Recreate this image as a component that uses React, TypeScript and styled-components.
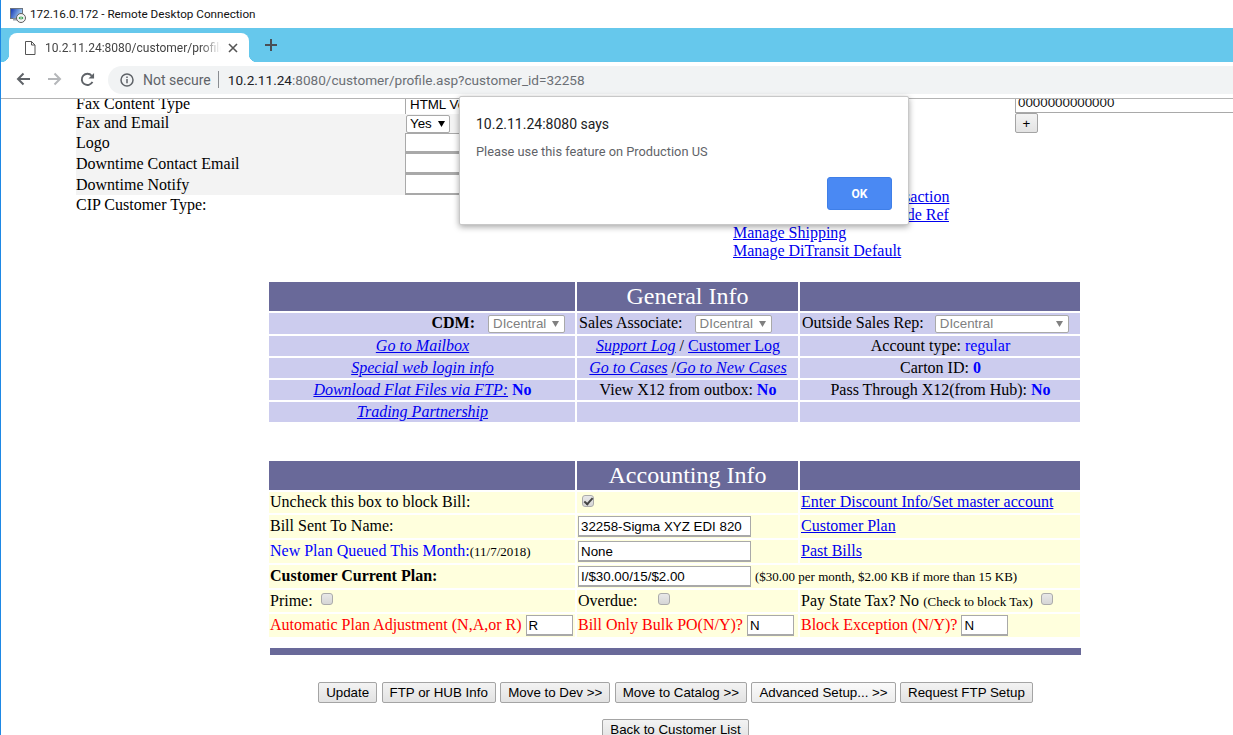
import React from "react";
import styled, { createGlobalStyle } from "styled-components";

const GlobalStyle = createGlobalStyle`
  html, body {
    margin: 0;
    padding: 0;
    height: 100%;
    overflow: hidden;
    background: #fff;
  }
  #root { height: 100%; }
  * { box-sizing: border-box; }
`;

const arrow = (color: string) =>
  `url("data:image/svg+xml,%3Csvg xmlns='http://www.w3.org/2000/svg' width='7' height='6'%3E%3Cpath d='M0 0h7L3.500 6z' fill='${color}'/%3E%3C/svg%3E")`;

const Shell = styled.div`
  position: relative;
  width: 1233px;
  height: 735px;
  overflow: hidden;
  border-left: 1px solid #1e88e5;
  font-family: "Liberation Serif", "Times New Roman", serif;
  font-size: 16px;
  color: #000;
`;

const TitleBar = styled.div`
  height: 28px;
  display: flex;
  align-items: center;
  padding-left: 8px;
  gap: 4px;
  font-family: Roboto, sans-serif;
  font-size: 11.7px;
  color: #111;
`;

const TabStrip = styled.div`
  height: 34px;
  background: #66c8ec;
  display: flex;
  align-items: flex-end;
  padding-left: 8px;
`;

const Tab = styled.div`
  position: relative;
  width: 240px;
  height: 29px;
  background: #fff;
  border-radius: 8px 8px 0 0;
  display: flex;
  align-items: center;
  padding-left: 15px;
  font-family: Roboto, sans-serif;
  font-size: 12px;
  color: #444;
  &::before,
  &::after {
    content: "";
    position: absolute;
    bottom: 0;
    width: 8px;
    height: 8px;
  }
  &::before {
    left: -8px;
    background: radial-gradient(circle at 0 0, #66c8ec 8px, #fff 8.5px);
  }
  &::after {
    right: -8px;
    background: radial-gradient(circle at 100% 0, #66c8ec 8px, #fff 8.5px);
  }
`;

const TabTitle = styled.span`
  width: 176px;
  margin-left: 9px;
  white-space: nowrap;
  overflow: hidden;
  -webkit-mask-image: linear-gradient(90deg, #000 88%, transparent);
  mask-image: linear-gradient(90deg, #000 88%, transparent);
`;

const NewTab = styled.div`
  margin: 0 0 7px 16px;
  height: 20px;
  display: flex;
  align-items: center;
`;

const Toolbar = styled.div`
  height: 37px;
  display: flex;
  align-items: center;
  padding: 0 0 2px 15px;
  border-bottom: 1px solid #b4b4b4;
`;

const NavIcons = styled.div`
  display: flex;
  align-items: center;
  gap: 18px;
  width: 92px;
`;

const AddressBar = styled.div`
  flex: 1;
  height: 28px;
  margin-top: 1px;
  background: #f1f3f4;
  border-radius: 14px 0 0 14px;
  display: flex;
  align-items: center;
  padding-left: 12px;
  font-family: Roboto, sans-serif;
  font-size: 13.6px;
  white-space: nowrap;
`;

const NotSecure = styled.span`
  margin-left: 9px;
  font-size: 14px;
  color: #5f6368;
`;

const Divider = styled.span`
  width: 1px;
  height: 17px;
  margin: 0 9px 0 7px;
  background: #8a8d91;
`;

const Host = styled.span`
  color: #202124;
`;

const UrlRest = styled.span`
  color: #6b6f74;
`;

const Page = styled.div`
  height: 636px;
  overflow: hidden;
`;

const TopSection = styled.div`
  margin-top: -4px;
  height: 185px;
  display: grid;
  grid-template-columns: 657px 282px 1fr;
  padding-left: 75px;
`;

const InfoRow = styled.div<{ $shaded?: boolean; $h: number }>`
  display: grid;
  grid-template-columns: 329px 1fr;
  height: ${(p) => p.$h}px;
  line-height: ${(p) => (p.$h > 20 ? p.$h : p.$h - 1)}px;
  background: ${(p) => (p.$shaded ? "#f3f3f3" : "transparent")};
`;

const InfoInput = styled.div`
  height: 100%;
  width: 200px;
  background: #fff;
  border: 1px solid #a9a9a9;
  border-width: 1px 1px 2px 1px;
  border-right: 0;
`;

const FaxType = styled.div`
  height: 100%;
  padding: 1px 0 0 4px;
  font-family: "Liberation Sans", Arial, sans-serif;
  font-size: 13.33px;
  line-height: 17px;
  border-left: 1px solid #a9a9a9;
  background: #fff;
`;

const YesSelect = styled.div`
  padding-left: 1px;
  line-height: 0;
  height: 100%;
  display: flex;
  align-items: center;
`;

const LinkColumn = styled.div`
  padding-top: 93px;
  white-space: nowrap;
  line-height: 18px;
`;

const PlainLink = styled.a`
  display: block;
  color: #0000ee;
  text-decoration: underline;
`;

const FaxNumber = styled.div`
  height: 18px;
  border: 1px solid #a9a9a9;
  border-top: 0;
  border-right: 0;
  padding-left: 2px;
  font-family: "Liberation Sans", Arial, sans-serif;
  font-size: 13.33px;
  line-height: 16px;
  color: #111;
`;

const SmallButton = styled.button`
  display: block;
  width: 23px;
  height: 20px;
  padding: 0;
  background: linear-gradient(#f3f3f3, #e3e3e3);
  border: 1px solid #a4a4a4;
  border-radius: 2px;
  font-family: "Liberation Sans", Arial, sans-serif;
  font-size: 13.33px;
  color: #000;
`;

const FormTable = styled.table`
  width: 815px;
  margin-left: 266px;
  table-layout: fixed;
  border-collapse: separate;
  border-spacing: 2px;
`;

const HeadCell = styled.th`
  padding: 0;
  height: 29px;
  background: #696999;
  color: #fff;
  font-size: 24px;
  font-weight: 400;
  text-align: center;
  white-space: nowrap;
`;

const Cell = styled.td<{ $tone: "lilac" | "cream"; $align?: string; $h: number; $lift?: boolean }>`
  padding: 0 1px ${(p) => (p.$lift ? 1 : 0)}px ${(p) => (p.$tone === "lilac" ? 2 : 1)}px;
  height: ${(p) => p.$h}px;
  background: ${(p) => (p.$tone === "lilac" ? "#ccccee" : "#ffffdd")};
  text-align: ${(p) => p.$align || "left"};
  white-space: nowrap;
  overflow: hidden;
  line-height: 18px;
`;

const SelectBox = styled.select<{ $w: number; $dark?: boolean }>`
  appearance: none;
  width: ${(p) => p.$w}px;
  height: 18px;
  padding: 0 0 0 ${(p) => (p.$dark ? 3 : 4)}px;
  margin: 0;
  vertical-align: baseline;
  background: #fff ${(p) => arrow(p.$dark ? "%23000" : "%23808080")} no-repeat right ${(p) => (p.$dark ? 4 : 5)}px center;
  border: 1px solid #a9a9a9;
  border-radius: 2px;
  font-family: "Liberation Sans", Arial, sans-serif;
  font-size: 13.33px;
  color: ${(p) => (p.$dark ? "#000" : "#808080")};
  opacity: 1;
`;

const CdmLabel = styled.b`
  margin-right: 13px;
`;

const AssocLabel = styled.span<{ $gap: number }>`
  margin-right: ${(p) => p.$gap}px;
`;

const CdmGap = styled.span`
  margin-right: 9px;
`;

const BlueLink = styled.a<{ $italic?: boolean }>`
  color: #0000ee;
  text-decoration: underline;
  font-style: ${(p) => (p.$italic ? "italic" : "normal")};
`;

const Value = styled.span<{ $bold?: boolean }>`
  color: #0000ff;
  font-weight: ${(p) => (p.$bold ? 700 : 400)};
`;

const AccountingWrap = styled.div`
  margin-top: 35px;
`;

const TextBox = styled.input<{ $w: number }>`
  width: ${(p) => p.$w}px;
  height: 21px;
  margin: 0;
  padding: 1px 2px;
  vertical-align: baseline;
  background: #fff;
  border: 1px solid #a9a9a9;
  border-width: 1px 1px 2px 1px;
  font-family: "Liberation Sans", Arial, sans-serif;
  font-size: 13.33px;
  color: #000;
  outline: 0;
`;

const Tick = styled.input<{ $left?: number }>`
  appearance: none;
  position: relative;
  display: inline-block;
  width: 12px;
  height: 12px;
  margin: 0 0 0 ${(p) => p.$left ?? 0}px;
  vertical-align: 1px;
  background: linear-gradient(#e8e8e8, #d6d6d6);
  border: 1px solid #ababab;
  border-radius: 3px;
  &:checked::after {
    content: "";
    position: absolute;
    left: 3px;
    top: 0;
    width: 3px;
    height: 7px;
    border: solid #444;
    border-width: 0 2px 2px 0;
    transform: rotate(42deg);
  }
`;

const Small = styled.span<{ $gap?: number }>`
  font-size: 13px;
  margin-left: ${(p) => p.$gap ?? 0}px;
`;

const Red = styled.span`
  color: #ff0000;
`;

const Rule = styled.div`
  width: 811px;
  height: 7px;
  margin: 9px 0 0 269px;
  background: #696999;
`;

const ButtonBar = styled.div`
  width: 812px;
  margin: 27px 0 0 268.5px;
  display: flex;
  justify-content: center;
  gap: 4.4px;
`;

const BackBar = styled(ButtonBar)`
  margin-top: 16px;
`;

const ActionButton = styled.button<{ $hover?: boolean }>`
  height: 21px;
  padding: 0 7px;
  background: ${(p) => (p.$hover ? "linear-gradient(#fafafa, #ececec)" : "linear-gradient(#f3f3f3, #e2e2e2)")};
  border: 1px solid #a4a4a4;
  border-radius: 2px;
  font-family: "Liberation Sans", Arial, sans-serif;
  font-size: 13.33px;
  color: #000;
  white-space: nowrap;
`;

const Dialog = styled.div`
  position: absolute;
  left: 458px;
  top: 96px;
  width: 450px;
  height: 129px;
  background: #fff;
  border: 1px solid #c8c8c8;
  border-radius: 2px;
  box-shadow: 0 2px 6px rgba(0, 0, 0, 0.35);
  padding: 18px 16px 0;
  font-family: Roboto, sans-serif;
`;

const DialogTitle = styled.div`
  font-size: 14px;
  line-height: 18px;
  color: #202124;
`;

const DialogBody = styled.div`
  margin-top: 11px;
  font-size: 12.8px;
  line-height: 16px;
  color: #5f6368;
`;

const DialogActions = styled.div`
  margin-top: 17px;
  display: flex;
  justify-content: flex-end;
`;

const OkButton = styled.button`
  width: 65px;
  height: 33px;
  background: #4a89f3;
  border: 1px solid #3f7fe8;
  border-radius: 3px;
  color: #fff;
  font-family: Roboto, sans-serif;
  font-size: 12px;
  font-weight: 700;
`;

const RdpIcon = () => (
  <svg width="17" height="18" viewBox="0 0 17 18">
    <defs>
      <linearGradient id="rdpScreen" x1="0" x2="1" y1="0" y2="0.4">
        <stop offset="0" stopColor="#0b2fb0" />
        <stop offset="1" stopColor="#a9d4f5" />
      </linearGradient>
    </defs>
    <rect x="1.500" y="3.500" width="12" height="10" fill="url(#rdpScreen)" stroke="#6b7480" />
    <rect x="4" y="13.500" width="6" height="2" fill="#9aa0a8" />
    <circle cx="12" cy="13" r="4.500" fill="#f4f4f4" stroke="#5c5c5c" />
    <path d="M9.500 13l2-1.800v3.600zM14.500 13l-2-1.800v3.600z" fill="#1f9a3a" />
  </svg>
);

const FileIcon = () => (
  <svg width="12" height="14" viewBox="0 0 12 14" fill="none" stroke="#555" strokeWidth="1">
    <path d="M1.5.5h6l3.5 3.5v9.500h-9.500zM7.500.5V4H11" />
  </svg>
);

const CloseIcon = () => (
  <svg width="10" height="10" viewBox="0 0 10 10" stroke="#555" strokeWidth="1.6" style={{ marginLeft: 7 }}>
    <path d="M1 1l8 8M9 1l-8 8" />
  </svg>
);

const PlusIcon = () => (
  <svg width="12" height="12" viewBox="0 0 12 12" stroke="#4a4f55" strokeWidth="2">
    <path d="M6 0v12M0 6h12" />
  </svg>
);

const NavArrow = ({ flip, color }: { flip?: boolean; color: string }) => (
  <svg width="14" height="14" viewBox="0 0 14 14" fill="none" stroke={color} strokeWidth="2" style={flip ? { transform: "scaleX(-1)" } : undefined}>
    <path d="M14 7H2M7.500 1.500L2 7l5.500 5.500" />
  </svg>
);

const ReloadIcon = () => (
  <svg width="15" height="15" viewBox="0 0 16 16" fill="none">
    <path d="M13.300 10.500A6 6 0 1 1 12.500 4" stroke="#5f6368" strokeWidth="2" />
    <path d="M15 1v6H9z" fill="#5f6368" />
  </svg>
);

const InfoIcon = () => (
  <svg width="14" height="14" viewBox="0 0 14 14" fill="none">
    <circle cx="7" cy="7" r="6" stroke="#5f6368" strokeWidth="1.500" />
    <path d="M7 6v4.200M7 3.500v1.500" stroke="#5f6368" strokeWidth="1.500" />
  </svg>
);

export default function App() {
  return (
    <Shell>
      <GlobalStyle />
      <TitleBar>
        <RdpIcon />
        <span>172.16.0.172 - Remote Desktop Connection</span>
      </TitleBar>
      <TabStrip>
        <Tab>
          <FileIcon />
          <TabTitle>10.2.11.24:8080/customer/profile.asp?customer_id=32258</TabTitle>
          <CloseIcon />
        </Tab>
        <NewTab>
          <PlusIcon />
        </NewTab>
      </TabStrip>
      <Toolbar>
        <NavIcons>
          <NavArrow color="#5f6368" />
          <NavArrow color="#b5b7ba" flip />
          <ReloadIcon />
        </NavIcons>
        <AddressBar>
          <InfoIcon />
          <NotSecure>Not secure</NotSecure>
          <Divider />
          <Host>10.2.11.24</Host>
          <UrlRest>:8080/customer/profile.asp?customer_id=32258</UrlRest>
        </AddressBar>
      </Toolbar>

      <Page>
        <TopSection>
          <div>
            <InfoRow $h={19}>
              <span>Fax Content Type</span>
              <FaxType>HTML Version</FaxType>
            </InfoRow>
            <InfoRow $h={19} $shaded>
              <span>Fax and Email</span>
              <YesSelect>
                <SelectBox $w={44} $dark disabled>
                  <option>Yes</option>
                </SelectBox>
              </YesSelect>
            </InfoRow>
            <InfoRow $h={20} $shaded>
              <span>Logo</span>
              <InfoInput />
            </InfoRow>
            <InfoRow $h={21} $shaded>
              <span>Downtime Contact Email</span>
              <InfoInput />
            </InfoRow>
            <InfoRow $h={21} $shaded>
              <span>Downtime Notify</span>
              <InfoInput />
            </InfoRow>
            <InfoRow $h={20}>
              <span>CIP Customer Type:</span>
            </InfoRow>
          </div>
          <LinkColumn>
            <PlainLink>Manage Retailer Hub Transaction</PlainLink>
            <PlainLink>Manage Customer Item Code Ref</PlainLink>
            <PlainLink>Manage Shipping</PlainLink>
            <PlainLink>Manage DiTransit Default</PlainLink>
          </LinkColumn>
          <div>
            <FaxNumber>0000000000000</FaxNumber>
            <SmallButton>+</SmallButton>
          </div>
        </TopSection>

        <FormTable>
          <colgroup>
            <col width="306" />
            <col width="221" />
            <col width="280" />
          </colgroup>
          <tbody>
            <tr>
              <HeadCell />
              <HeadCell>General Info</HeadCell>
              <HeadCell />
            </tr>
            <tr>
              <Cell $tone="lilac" $h={21} $align="right">
                <CdmLabel>CDM:</CdmLabel>
                <SelectBox $w={77} disabled>
                  <option>DIcentral</option>
                </SelectBox>
                <CdmGap />
              </Cell>
              <Cell $tone="lilac" $h={21}>
                <AssocLabel $gap={12}>Sales Associate:</AssocLabel>
                <SelectBox $w={77} disabled>
                  <option>DIcentral</option>
                </SelectBox>
              </Cell>
              <Cell $tone="lilac" $h={21}>
                <AssocLabel $gap={11}>Outside Sales Rep:</AssocLabel>
                <SelectBox $w={134} disabled>
                  <option>DIcentral</option>
                </SelectBox>
              </Cell>
            </tr>
            <tr>
              <Cell $tone="lilac" $h={20} $align="center">
                <BlueLink $italic>Go to Mailbox</BlueLink>
              </Cell>
              <Cell $tone="lilac" $h={20} $align="center">
                <BlueLink $italic>Support Log</BlueLink> / <BlueLink>Customer Log</BlueLink>
              </Cell>
              <Cell $tone="lilac" $h={20} $align="center">
                Account type: <Value>regular</Value>
              </Cell>
            </tr>
            <tr>
              <Cell $tone="lilac" $h={20} $align="center">
                <BlueLink $italic>Special web login info</BlueLink>
              </Cell>
              <Cell $tone="lilac" $h={20} $align="center">
                <BlueLink $italic>Go to Cases</BlueLink> /<BlueLink $italic>Go to New Cases</BlueLink>
              </Cell>
              <Cell $tone="lilac" $h={20} $align="center">
                Carton ID: <Value $bold>0</Value>
              </Cell>
            </tr>
            <tr>
              <Cell $tone="lilac" $h={20} $align="center">
                <BlueLink $italic>Download Flat Files via FTP:</BlueLink> <Value $bold>No</Value>
              </Cell>
              <Cell $tone="lilac" $h={20} $align="center">
                View X12 from outbox: <Value $bold>No</Value>
              </Cell>
              <Cell $tone="lilac" $h={20} $align="center">
                Pass Through X12(from Hub): <Value $bold>No</Value>
              </Cell>
            </tr>
            <tr>
              <Cell $tone="lilac" $h={20} $align="center">
                <BlueLink $italic>Trading Partnership</BlueLink>
              </Cell>
              <Cell $tone="lilac" $h={20} />
              <Cell $tone="lilac" $h={20} />
            </tr>
          </tbody>
        </FormTable>

        <AccountingWrap>
          <FormTable>
            <colgroup>
              <col width="306" />
              <col width="221" />
              <col width="280" />
            </colgroup>
            <tbody>
              <tr>
                <HeadCell />
                <HeadCell>Accounting Info</HeadCell>
                <HeadCell />
              </tr>
              <tr>
                <Cell $tone="cream" $h={21} $lift>Uncheck this box to block Bill:</Cell>
                <Cell $tone="cream" $h={21}>
                  <Tick type="checkbox" defaultChecked disabled $left={4} />
                </Cell>
                <Cell $tone="cream" $h={21} $lift>
                  <BlueLink>Enter Discount Info/Set master account</BlueLink>
                </Cell>
              </tr>
              <tr>
                <Cell $tone="cream" $h={23} $lift>Bill Sent To Name:</Cell>
                <Cell $tone="cream" $h={23}>
                  <TextBox $w={173} readOnly value="32258-Sigma XYZ EDI 820" />
                </Cell>
                <Cell $tone="cream" $h={23} $lift>
                  <BlueLink>Customer Plan</BlueLink>
                </Cell>
              </tr>
              <tr>
                <Cell $tone="cream" $h={23} $lift>
                  <Value>New Plan Queued This Month:</Value>
                  <Small>(11/7/2018)</Small>
                </Cell>
                <Cell $tone="cream" $h={23}>
                  <TextBox $w={173} readOnly value="None" />
                </Cell>
                <Cell $tone="cream" $h={23} $lift>
                  <BlueLink>Past Bills</BlueLink>
                </Cell>
              </tr>
              <tr>
                <Cell $tone="cream" $h={23} $lift>
                  <b>Customer Current Plan:</b>
                </Cell>
                <Cell $tone="cream" $h={23} colSpan={2}>
                  <TextBox $w={173} readOnly value="I/$30.00/15/$2.00" />
                  <Small $gap={4}>($30.00 per month, $2.00 KB if more than 15 KB)</Small>
                </Cell>
              </tr>
              <tr>
                <Cell $tone="cream" $h={22}>
                  Prime: <Tick type="checkbox" disabled $left={4} />
                </Cell>
                <Cell $tone="cream" $h={22}>
                  Overdue: <Tick type="checkbox" disabled $left={16} />
                </Cell>
                <Cell $tone="cream" $h={22}>
                  Pay State Tax? No <Small>(Check to block Tax)</Small>{" "}
                  <Tick type="checkbox" disabled $left={4} />
                </Cell>
              </tr>
              <tr>
                <Cell $tone="cream" $h={23}>
                  <Red>Automatic Plan Adjustment (N,A,or R)</Red> <TextBox $w={47} readOnly value="R" />
                </Cell>
                <Cell $tone="cream" $h={23}>
                  <Red>Bill Only Bulk PO(N/Y)?</Red> <TextBox $w={47} readOnly value="N" />
                </Cell>
                <Cell $tone="cream" $h={23}>
                  <Red>Block Exception (N/Y)?</Red> <TextBox $w={47} readOnly value="N" />
                </Cell>
              </tr>
            </tbody>
          </FormTable>
        </AccountingWrap>

        <Rule />

        <ButtonBar>
          <ActionButton>Update</ActionButton>
          <ActionButton>FTP or HUB Info</ActionButton>
          <ActionButton>Move to Dev &gt;&gt;</ActionButton>
          <ActionButton>Move to Catalog &gt;&gt;</ActionButton>
          <ActionButton $hover>Advanced Setup... &gt;&gt;</ActionButton>
          <ActionButton>Request FTP Setup</ActionButton>
        </ButtonBar>
        <BackBar>
          <ActionButton>Back to Customer List</ActionButton>
        </BackBar>
      </Page>

      <Dialog>
        <DialogTitle>10.2.11.24:8080 says</DialogTitle>
        <DialogBody>Please use this feature on Production US</DialogBody>
        <DialogActions>
          <OkButton>OK</OkButton>
        </DialogActions>
      </Dialog>
    </Shell>
  );
}
